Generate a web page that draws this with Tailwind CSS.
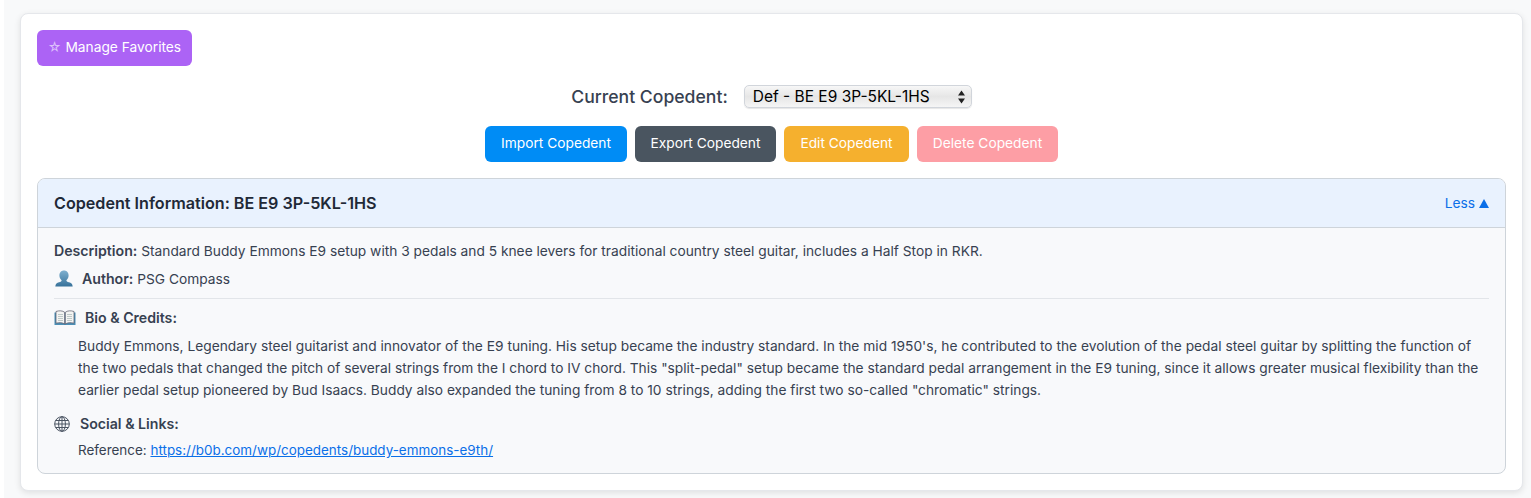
<!DOCTYPE html>
<html lang="en">
<head>
<meta charset="utf-8">
<title>Copedent</title>
<script src="https://cdn.jsdelivr.net/npm/@tailwindcss/browser@4"></script>
</head>
<body class="bg-white font-['Inter','Liberation_Sans',sans-serif] text-[13.75px] overflow-hidden">
<div class="ml-1 h-[498px] bg-[#f8f9fa] pt-[13px] pl-4 pr-2">
  <div class="h-[478px] bg-white border border-[#e5e7eb] rounded-lg shadow-[0_2px_6px_rgba(0,0,0,0.1)] pt-4 px-4">
    <div class="flex">
      <button class="h-9 w-[155px] pb-[1px] rounded-md bg-[#ac63f5] text-white text-[13.75px] flex items-center justify-center gap-1"><span class="text-[13px] text-[#dcc0fb]">☆</span><span>Manage Favorites</span></button>
    </div>
    <div class="flex items-center justify-center mt-[19px] h-[23px]">
      <label class="text-[17.6px] font-medium text-[#374151] mr-4 leading-none">Current Copedent:</label>
      <div class="relative w-[228px] h-[23px]">
        <select class="appearance-none w-full h-full rounded-[5px] border border-[#d1d5db] bg-gradient-to-b from-[#f7f7f7] via-[#e6e6e6] to-[#f5f5f5] pl-2 text-[15.5px] text-black leading-none shadow-[0_1px_1px_rgba(0,0,0,0.1)]">
          <option>Def - BE E9 3P-5KL-1HS</option>
        </select>
        <svg class="absolute right-[6px] top-[5px] pointer-events-none" width="9" height="14" viewBox="0 0 9 14"><path d="M4.500 0.500 L8 5.500 H1 Z M1 8.500 H8 L4.500 13.500 Z" fill="#222"/></svg>
      </div>
    </div>
    <div class="flex justify-center gap-2 mt-[18px]">
      <button class="h-9 pb-[1px] w-[142px] rounded-md bg-[#008cf5] text-white">Import Copedent</button>
      <button class="h-9 pb-[1px] w-[141px] rounded-md bg-[#4a5560] text-white">Export Copedent</button>
      <button class="h-9 pb-[1px] w-[125px] rounded-md bg-[#f5b02e] text-white">Edit Copedent</button>
      <button class="h-9 pb-[1px] w-[141px] rounded-md bg-[#fd9ea5] text-white">Delete Copedent</button>
    </div>
    <div class="mt-4 h-[296px] border border-[#ced4da] rounded-lg bg-[#f8f9fb] overflow-hidden">
      <div class="h-[49px] bg-[#e9f2fe] border-b border-[#ced4da] flex items-center justify-between px-4">
        <h3 class="text-[16.15px] font-semibold text-[#1f2937]">Copedent Information: BE E9 3P-5KL-1HS</h3>
        <span class="text-[#0b6fe8] text-[13.75px] flex items-center gap-1 pt-[1px]">Less <svg width="10" height="9" viewBox="0 0 10 9"><path d="M5 0 L10 9 H0 Z" fill="#0b6fe8"/></svg></span>
      </div>
      <div class="px-4 text-[#374151]">
        <p class="mt-[13px] leading-[20px]"><strong class="font-semibold text-[14.15px]">Description:</strong> Standard Buddy Emmons E9 setup with 3 pedals and 5 knee levers for traditional country steel guitar, includes a Half Stop in RKR.</p>
        <div class="mt-[8px] flex items-center h-5 pb-[9px] box-content border-b border-[#e2e5e9]">
          <svg class="mr-2" width="20" height="18" viewBox="0 0 20 18"><defs><linearGradient id="u" x1="0" y1="0" x2="0" y2="1"><stop offset="0" stop-color="#7fb0cf"/><stop offset="1" stop-color="#37729a"/></linearGradient></defs><path d="M10 0.500c3 0 4.600 2.300 4.600 5 0 2-1 3.700-2.200 4.700 0 1 .8 1.500 2.600 2.100 2 .7 3.500 1.500 3.700 4.200H1.300c.2-2.700 1.700-3.500 3.700-4.200 1.800-.6 2.600-1.100 2.600-2.100C6.400 9.200 5.400 7.500 5.400 5.500c0-2.700 1.600-5 4.600-5z" fill="url(#u)"/></svg>
          <p><strong class="font-semibold text-[14.15px]">Author:</strong> PSG Compass</p>
        </div>
        <div class="mt-[9px] flex items-center h-5">
          <svg class="mr-[9px]" width="22" height="16" viewBox="0 0 22 16"><path d="M0.500 2.500H21.500V15H0.500Z" fill="#4d8fb5"/><path d="M2 1.500c3-1 6.500-1 8.700.8V14c-2.200-1.500-5.700-1.700-8.700-.8Z" fill="#f4f4f2" stroke="#556" stroke-width=".7"/><path d="M20 1.500c-3-1-6.500-1-8.700.8V14c2.200-1.500 5.700-1.700 8.700-.8Z" fill="#f4f4f2" stroke="#556" stroke-width=".7"/><path d="M4 4.500h5M4 6.500h5M4 8.500h5M4 10.500h5M13 4.500h5M13 6.500h5M13 8.500h5M13 10.500h5" stroke="#9aa" stroke-width=".6"/></svg>
          <p class="font-semibold text-[14.15px]">Bio &amp; Credits:</p>
        </div>
        <p class="mt-[7px] ml-6 leading-[22px]">Buddy Emmons, Legendary steel guitarist and innovator of the E9 tuning. His setup became the industry standard. In the mid 1950's, he contributed to the evolution of the pedal steel guitar by splitting the function of the two pedals that changed the pitch of several strings from the I chord to IV chord. This "split-pedal" setup became the standard pedal arrangement in the E9 tuning, since it allows greater musical flexibility than the earlier pedal setup pioneered by Bud Isaacs. Buddy also expanded the tuning from 8 to 10 strings, adding the first two so-called "chromatic" strings.</p>
        <div class="mt-[13px] flex items-center h-5">
          <svg class="mr-[10px]" width="16" height="16" viewBox="0 0 16 16" fill="none" stroke="#4b5563" stroke-width="1"><circle cx="8" cy="8" r="7.300"/><ellipse cx="8" cy="8" rx="3.400" ry="7.300"/><path d="M8 .7V15.300M.7 8H15.300M1.700 4.500H14.300M1.700 11.500H14.300"/></svg>
          <p class="font-semibold text-[14.15px]">Social &amp; Links:</p>
        </div>
        <p class="mt-[6px] ml-6 leading-5 text-[13.45px]">Reference: <a href="#" class="text-[#0b6fe8] underline">https://b0b.com/wp/copedents/buddy-emmons-e9th/</a></p>
      </div>
    </div>
  </div>
</div>
</body>
</html>
